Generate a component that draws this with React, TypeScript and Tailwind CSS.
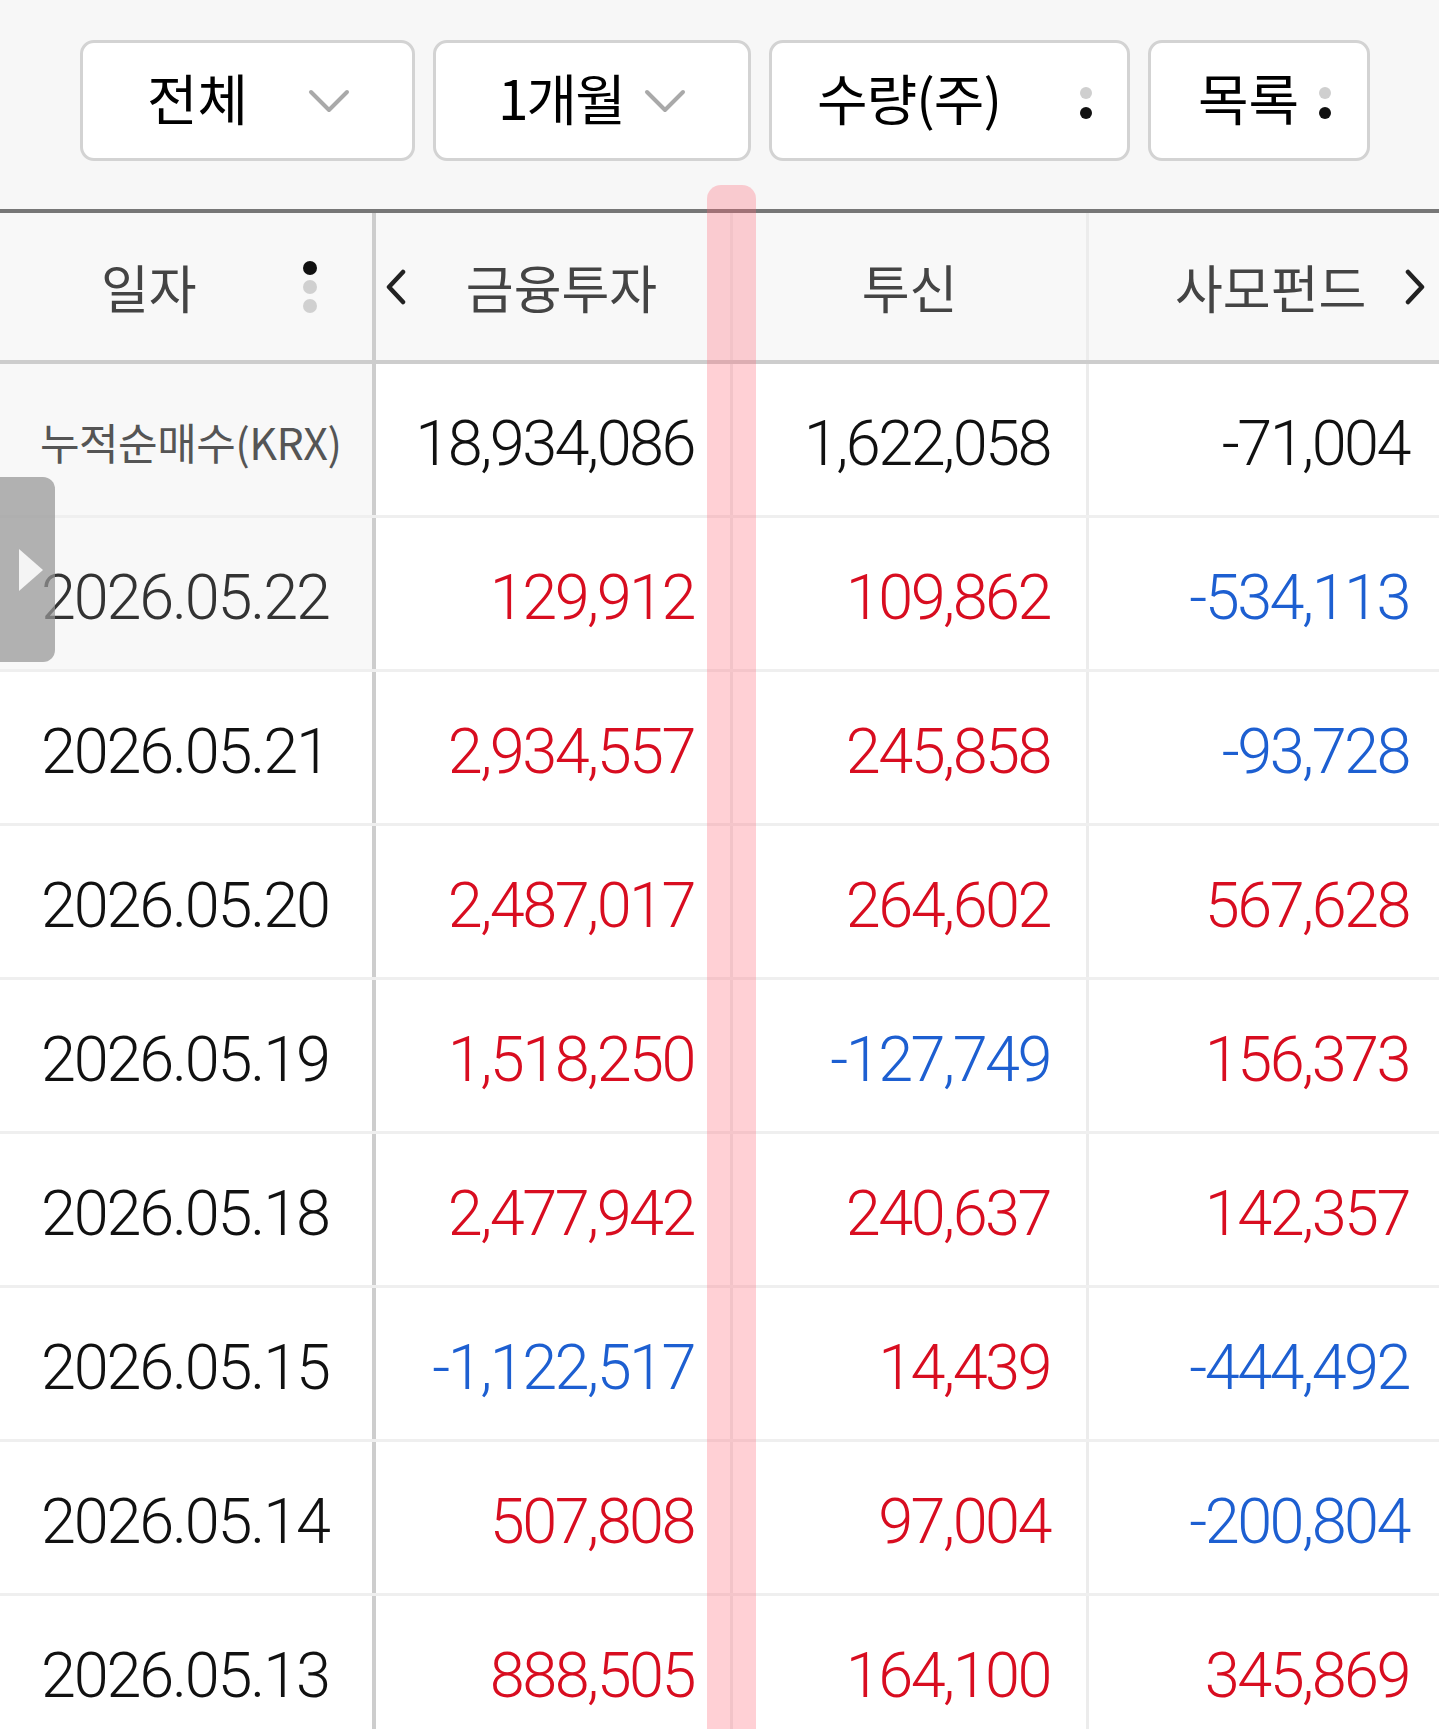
import React from "react";

const num = "font-['Roboto',sans-serif] font-light";
const kr = "font-['Noto_Sans_CJK_KR','Noto_Sans',sans-serif]";

const rows: { d: string; v: number[] }[] = [
  { d: "2026.05.22", v: [129912, 109862, -534113] },
  { d: "2026.05.21", v: [2934557, 245858, -93728] },
  { d: "2026.05.20", v: [2487017, 264602, 567628] },
  { d: "2026.05.19", v: [1518250, -127749, 156373] },
  { d: "2026.05.18", v: [2477942, 240637, 142357] },
  { d: "2026.05.15", v: [-1122517, 14439, -444492] },
  { d: "2026.05.14", v: [507808, 97004, -200804] },
  { d: "2026.05.13", v: [888505, 164100, 345869] },
];

const fmt = (n: number) => n.toLocaleString("en-US");

function ChevronDown() {
  return (
    <svg width="42" height="24" viewBox="0 0 42 24" fill="none">
      <path d="M3 3 L21 21 L39 3" stroke="#a9a9a9" strokeWidth="4" strokeLinecap="round" strokeLinejoin="round" />
    </svg>
  );
}

function Chevron({ dir }: { dir: "left" | "right" }) {
  return (
    <svg width="22" height="36" viewBox="0 0 22 36" fill="none">
      <path
        d={dir === "left" ? "M18 3 L4 18 L18 33" : "M4 3 L18 18 L4 33"}
        stroke="#222"
        strokeWidth="4.5"
        strokeLinecap="round"
        strokeLinejoin="round"
      />
    </svg>
  );
}

function Dots2() {
  return (
    <div className="flex flex-col items-center gap-[8px]">
      <span className="w-[12px] h-[12px] rounded-full bg-[#cfcfcf]" />
      <span className="w-[12px] h-[12px] rounded-full bg-[#111]" />
    </div>
  );
}

function FilterButton({ w, children }: { w: string; children: React.ReactNode }) {
  return (
    <div className={`${w} h-[121px] bg-white border-[3px] border-[#d3d3d3] rounded-[14px] flex items-center`}>
      {children}
    </div>
  );
}

function Cell({ value, plain, last }: { value: number; plain?: boolean; last?: boolean }) {
  const color = plain ? "text-[#111]" : value < 0 ? "text-[#1d5fd1]" : "text-[#d80d20]";
  return (
    <div
      className={`h-full flex items-center justify-end pt-[10px] ${last ? "pr-[30px]" : "pr-[36px]"} text-[63px] tracking-[-2.5px] ${num} ${color}`}
    >
      {fmt(value)}
    </div>
  );
}

export default function App() {
  return (
    <div className="relative w-[1439px] h-[1729px] overflow-hidden bg-white">
      <div className="h-[209px] bg-[#f7f7f7] pt-[40px] pl-[80px] flex gap-[18px]">
        <FilterButton w="w-[335px]">
          <span className={`${kr} text-[55px] leading-none text-black ml-[64px] mb-[8px]`}>전체</span>
          <span className="ml-[60px]"><ChevronDown /></span>
        </FilterButton>
        <FilterButton w="w-[318px]">
          <span className={`${kr} text-[55px] leading-none text-black ml-[62px] mb-[8px] tracking-[-2px]`}>1개월</span>
          <span className="ml-[20px]"><ChevronDown /></span>
        </FilterButton>
        <FilterButton w="w-[361px]">
          <span className={`${kr} text-[55px] leading-none text-black ml-[45px] mb-[8px] tracking-[-1px]`}>수량(주)</span>
          <span className="ml-auto mr-[35px] mt-[4px]"><Dots2 /></span>
        </FilterButton>
        <FilterButton w="w-[222px]">
          <span className={`${kr} text-[55px] leading-none text-black ml-[47px] mb-[8px]`}>목록</span>
          <span className="ml-[20px] mt-[4px]"><Dots2 /></span>
        </FilterButton>
      </div>

      <div className="grid grid-cols-[376px_357px_356px_1fr] h-[155px] border-t-4 border-b-4 border-t-[#777] border-b-[#cdcdcd] bg-[#f8f8f8]">
        <div className="flex items-center border-r-4 border-[#cdcdcd] pl-[101px]">
          <span className={`${kr} text-[52px] text-[#444]`}>일자</span>
          <div className="ml-[106px] flex flex-col items-center gap-[5px]">
            <span className="w-[14px] h-[14px] rounded-full bg-[#111]" />
            <span className="w-[14px] h-[14px] rounded-full bg-[#d0d0d0]" />
            <span className="w-[14px] h-[14px] rounded-full bg-[#d0d0d0]" />
          </div>
        </div>
        <div className="flex items-center border-r-[3px] border-[#ececec] pl-[9px]">
          <Chevron dir="left" />
          <span className={`${kr} flex-1 text-center pr-[14px] text-[52px] text-[#444]`}>금융투자</span>
        </div>
        <div className="flex items-center justify-center border-r-[3px] border-[#ececec]">
          <span className={`${kr} text-[52px] text-[#444]`}>투신</span>
        </div>
        <div className="flex items-center pl-[86px]">
          <span className={`${kr} text-[52px] text-[#444]`}>사모펀드</span>
          <span className="ml-[38px]"><Chevron dir="right" /></span>
        </div>
      </div>

      <div className="grid grid-cols-[376px_357px_356px_1fr] h-[154px] border-b-[3px] border-[#efefef]">
        <div className="flex items-center pl-[40px] pt-[4px] border-r-4 border-[#cdcdcd] bg-[#f8f8f8]">
          <span className={`${kr} text-[43px] text-[#555] tracking-[-0.5px]`}>누적순매수(KRX)</span>
        </div>
        <div className="border-r-[3px] border-[#ececec]"><Cell value={18934086} plain /></div>
        <div className="border-r-[3px] border-[#ececec]"><Cell value={1622058} plain /></div>
        <div><Cell value={-71004} plain last /></div>
      </div>

      {rows.map((r, i) => (
        <div key={r.d} className="grid grid-cols-[376px_357px_356px_1fr] h-[154px] border-b-[3px] border-[#efefef]">
          <div
            className={`flex items-center pl-[41px] pt-[10px] border-r-4 border-[#cdcdcd] text-[63px] tracking-[-2.2px] ${num} ${
              i === 0 ? "bg-[#f8f8f8] text-[#333]" : "bg-white text-[#111]"
            }`}
          >
            {r.d}
          </div>
          <div className="border-r-[3px] border-[#ececec]"><Cell value={r.v[0]} /></div>
          <div className="border-r-[3px] border-[#ececec]"><Cell value={r.v[1]} /></div>
          <div><Cell value={r.v[2]} last /></div>
        </div>
      ))}

      {/* touch highlight over the table */}
      <div className="absolute left-[707px] top-[185px] bottom-0 w-[49px] rounded-t-[14px] bg-[rgba(255,100,115,0.3)]" />

      {/* side drawer handle */}
      <div className="absolute left-0 top-[477px] w-[55px] h-[185px] rounded-r-[12px] bg-[rgba(150,150,150,0.72)] flex items-center pl-[19px]">
        <svg width="24" height="42" viewBox="0 0 24 42">
          <path d="M0 0 L24 21 L0 42 Z" fill="#f4f4f4" />
        </svg>
      </div>
    </div>
  );
}
